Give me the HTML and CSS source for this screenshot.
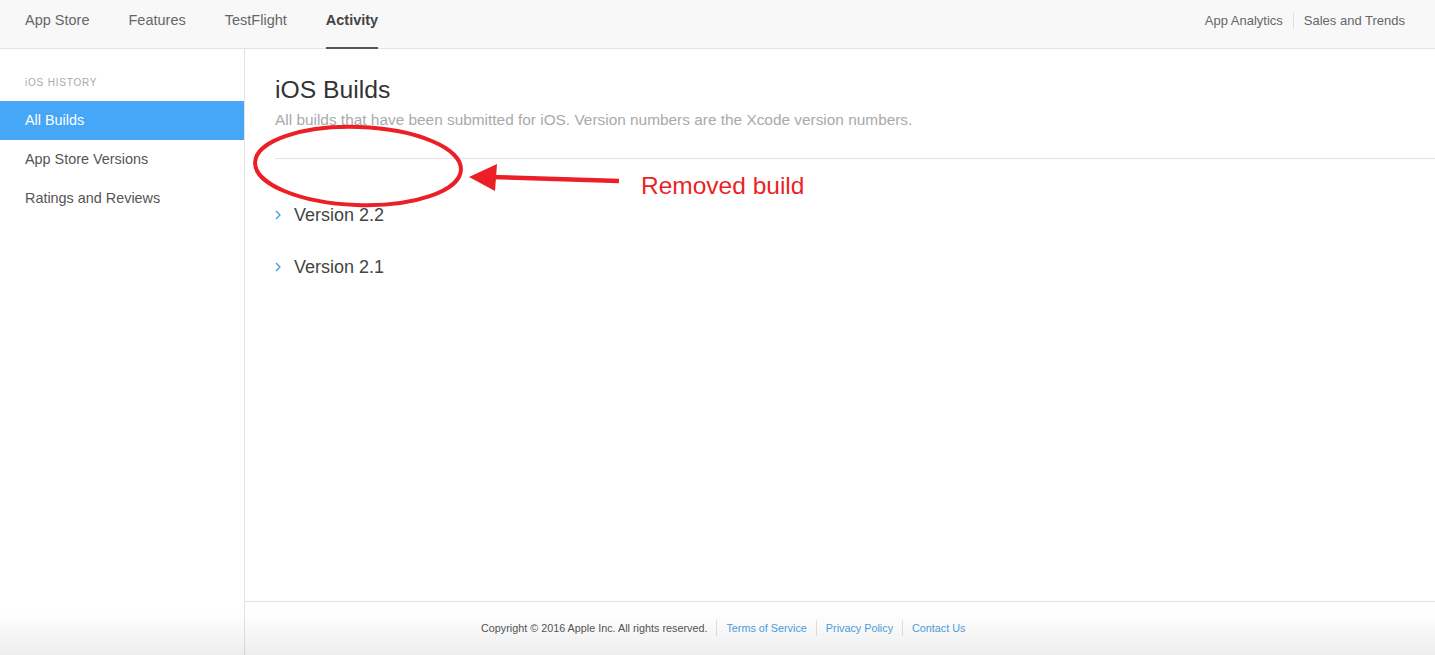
FILE: index.html
```html
<!DOCTYPE html>
<html lang="en">
<head>
    <meta charset="UTF-8">
    <meta name="viewport" content="width=device-width, initial-scale=1.0">
    <title>Activity - iOS Builds</title>
    <link rel="stylesheet" href="styles.css">
</head>
<body>
    <header class="topbar">
        <nav class="main-nav">
            <a href="#">App Store</a>
            <a href="#">Features</a>
            <a href="#">TestFlight</a>
            <a href="#" class="active">Activity</a>
        </nav>
        <nav class="side-nav">
            <a href="#">App Analytics</a>
            <span class="divider"></span>
            <a href="#">Sales and Trends</a>
        </nav>
    </header>

    <div class="layout">
        <aside class="sidebar">
            <h4>iOS History</h4>
            <a href="#" class="selected">All Builds</a>
            <a href="#">App Store Versions</a>
            <a href="#">Ratings and Reviews</a>
        </aside>

        <main class="content">
            <section class="builds">
                <h1>iOS Builds</h1>
                <p class="subtitle">All builds that have been submitted for iOS. Version numbers are the Xcode version numbers.</p>
                <hr>
                <ul class="versions">
                    <li>
                        <svg class="chevron" width="6" height="10" viewBox="0 0 6 10"><polyline points="1,1 5,5 1,9" fill="none" stroke="#3d9de0" stroke-width="1.3"/></svg>
                        Version 2.2
                    </li>
                    <li>
                        <svg class="chevron" width="6" height="10" viewBox="0 0 6 10"><polyline points="1,1 5,5 1,9" fill="none" stroke="#3d9de0" stroke-width="1.3"/></svg>
                        Version 2.1
                    </li>
                </ul>
            </section>

            <footer class="footer">
                <span>Copyright © 2016 Apple Inc. All rights reserved.</span>
                <a href="#">Terms of Service</a>
                <a href="#">Privacy Policy</a>
                <a href="#">Contact Us</a>
            </footer>
        </main>
    </div>

    <div class="window-shadow"></div>

    <!-- annotation drawn over the screenshot -->
    <svg class="annotation" width="1435" height="655" viewBox="0 0 1435 655">
        <ellipse cx="358" cy="166" rx="103" ry="39" transform="rotate(2 358 166)" fill="none" stroke="#ec1f26" stroke-width="4"/>
        <line x1="619" y1="181" x2="490" y2="177" stroke="#ec1f26" stroke-width="4.5"/>
        <polygon points="469,177 497,164 495,191" fill="#ec1f26"/>
    </svg>
    <div class="annotation-label">Removed build</div>
</body>
</html>
```

FILE: styles.css
```css
:root {
    --text-color: #555;
    --muted-color: #aaa;
    --border-color: #e3e3e3;
    --blue: #46a7f8;
    --link-color: #4aa0e2;
    --red: #ec1f26;
}

* {
    margin: 0;
    padding: 0;
    box-sizing: border-box;
}

html, body {
    height: 100%;
}

body {
    position: relative;
    display: flex;
    flex-direction: column;
    overflow: hidden;
    font-family: 'Liberation Sans', Arial, sans-serif;
    color: var(--text-color);
    background-color: white;
}

a {
    color: inherit;
    text-decoration: none;
}

.topbar {
    display: flex;
    justify-content: space-between;
    align-items: stretch;
    height: 49px;
    padding: 0 30px 0 25px;
    background-color: #f8f8f8;
    border-bottom: 1px solid var(--border-color);
}

.main-nav {
    display: flex;
    gap: 39px;
}

.main-nav a {
    display: flex;
    align-items: center;
    padding-bottom: 7px;
    font-size: 14.5px;
    color: #666;
    border-bottom: 2px solid transparent;
}

.main-nav a.active {
    color: #444;
    font-weight: bold;
    border-bottom-color: #555;
    margin-bottom: -1px;
}

.side-nav {
    display: flex;
    align-items: center;
    padding-bottom: 8px;
    font-size: 13px;
    color: #666;
}

.side-nav .divider {
    width: 1px;
    height: 17px;
    margin: 0 10px;
    background-color: #e0e0e0;
}

.layout {
    flex: 1;
    display: flex;
    min-height: 0;
}

.sidebar {
    width: 245px;
    flex-shrink: 0;
    padding-top: 24px;
    border-right: 1px solid var(--border-color);
}

.sidebar h4 {
    height: 20px;
    line-height: 20px;
    margin-bottom: 8px;
    padding-left: 25px;
    font-size: 10px;
    font-weight: normal;
    letter-spacing: 0.8px;
    text-transform: uppercase;
    color: var(--muted-color);
}

.sidebar h4::first-letter {
    text-transform: lowercase;
}

.sidebar a {
    display: block;
    height: 39px;
    line-height: 39px;
    padding-left: 25px;
    font-size: 14.4px;
    color: #555;
}

.sidebar a.selected {
    background-color: var(--blue);
    color: white;
}

.content {
    flex: 1;
    display: flex;
    flex-direction: column;
}

.builds {
    flex: 1;
    padding: 25px 0 0 30px;
}

.builds h1 {
    height: 32px;
    line-height: 32px;
    margin-bottom: 4px;
    font-size: 24.7px;
    font-weight: normal;
    color: #333;
}

.subtitle {
    height: 20px;
    line-height: 20px;
    font-size: 15.4px;
    color: var(--muted-color);
}

.builds hr {
    margin-top: 28px;
    border: none;
    border-top: 1px solid var(--border-color);
}

.versions {
    list-style: none;
    margin-top: 30px;
}

.versions li {
    display: flex;
    align-items: center;
    height: 52px;
    font-size: 18px;
    color: #444;
}

.chevron {
    margin: 0 13px 0 0;
}

.footer {
    display: flex;
    align-items: center;
    height: 54px;
    padding-left: 236px;
    padding-bottom: 2px;
    border-top: 1px solid var(--border-color);
    font-size: 10.8px;
    color: #555;
}

.footer a {
    color: var(--link-color);
    padding-left: 9px;
    margin-left: 9px;
    border-left: 1px solid #e2e2e2;
    line-height: 16px;
}

.window-shadow {
    position: absolute;
    left: 0;
    right: 0;
    bottom: 0;
    height: 42px;
    background: linear-gradient(to bottom, rgba(0,0,0,0), rgba(0,0,0,0.07));
    pointer-events: none;
}

.annotation {
    position: absolute;
    top: 0;
    left: 0;
    pointer-events: none;
}

.annotation-label {
    position: absolute;
    top: 171px;
    left: 641px;
    font-size: 24.5px;
    line-height: 30px;
    color: var(--red);
}
```
